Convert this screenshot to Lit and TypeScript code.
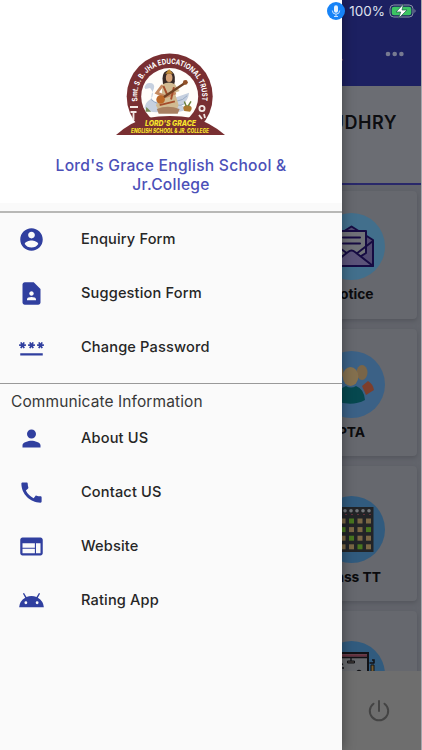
import { LitElement, css, html, svg } from 'lit'
import { customElement, property } from 'lit/decorators.js'

const icons: Record<string, any> = {
    account: svg`<path d="M12 2C6.480 2 2 6.480 2 12s4.480 10 10 10 10-4.480 10-10S17.520 2 12 2zm0 3c1.660 0 3 1.340 3 3s-1.340 3-3 3-3-1.340-3-3 1.340-3 3-3zm0 14.200c-2.500 0-4.710-1.280-6-3.220.030-1.990 4-3.080 6-3.080 1.990 0 5.970 1.090 6 3.080-1.290 1.940-3.500 3.220-6 3.220z"/>`,
    contactPage: svg`<path d="M14 2H6c-1.100 0-2 .9-2 2v16c0 1.100.9 2 2 2h12c1.100 0 2-.9 2-2V8l-6-6zm-2 8c1.100 0 2 .9 2 2s-.9 2-2 2-2-.9-2-2 .9-2 2-2zm4 8H8v-.570c0-.810.480-1.530 1.220-1.850A6.950 6.950 0 0 1 12 15c.990 0 1.930.210 2.780.580.740.320 1.220 1.040 1.220 1.850V18z"/>`,
    password: svg`<path d="M2 17h20v2H2v-2zm1.150-4.050L4 11.470l.850 1.480 1.300-.750-.850-1.480H7v-1.500H5.300l.850-1.470L4.850 7 4 8.470 3.150 7l-1.300.750.850 1.470H1v1.500h1.700l-.850 1.480 1.300.750zm6.700-.750 1.300.750.850-1.480.850 1.480 1.300-.750-.850-1.480H15v-1.500h-1.700l.850-1.470-1.300-.750L12 8.470 11.150 7l-1.300.750.850 1.470H9v1.500h1.700l-.850 1.480zM23 9.220h-1.700l.850-1.470-1.300-.750L20 8.470 19.150 7l-1.300.750.850 1.470H17v1.500h1.700l-.850 1.480 1.300.750.850-1.480.850 1.480 1.300-.750-.850-1.480H23v-1.500z"/>`,
    person: svg`<path d="M12 12c2.210 0 4-1.790 4-4s-1.790-4-4-4-4 1.790-4 4 1.790 4 4 4zm0 2c-2.670 0-8 1.340-8 4v2h16v-2c0-2.660-5.330-4-8-4z"/>`,
    phone: svg`<path d="M20.010 15.380c-1.230 0-2.420-.200-3.530-.560-.350-.120-.740-.030-1.010.240l-1.570 1.970c-2.830-1.350-5.480-3.900-6.890-6.830l1.950-1.660c.270-.280.350-.670.240-1.020-.370-1.110-.560-2.300-.560-3.530 0-.540-.450-.990-.990-.990H4.190C3.650 3 3 3.240 3 3.990 3 13.280 10.730 21 20.010 21c.710 0 .990-.630.990-1.180v-3.450c0-.540-.450-.990-.990-.990z"/>`,
    web: svg`<path d="M20 4H4c-1.100 0-2 .9-2 2v12c0 1.100.9 2 2 2h16c1.100 0 2-.9 2-2V6c0-1.100-.9-2-2-2zm-5 14H4v-4h11v4zm0-5H4V9h11v4zm5 5h-4V9h4v9z"/>`,
    android: svg`<path d="M17.600 9.480l1.840-3.180c.160-.310.040-.690-.260-.850-.290-.150-.650-.060-.830.220l-1.880 3.240a11.460 11.460 0 0 0-8.940 0L5.650 5.670c-.190-.290-.580-.380-.870-.200-.280.180-.370.540-.220.830L6.400 9.480A10.780 10.780 0 0 0 1 18h22a10.780 10.780 0 0 0-5.400-8.520zM7 15.250a1.250 1.250 0 1 1 0-2.500 1.250 1.250 0 0 1 0 2.500zm10 0a1.250 1.250 0 1 1 0-2.500 1.250 1.250 0 0 1 0 2.500z"/>`,
}

const ttRows = [
    ['#7a6744', '#7a6744', '#48761f', '#7a6744', '#7a6744'],
    ['#7a6744', '#48761f', '#7a6744', '#7a6744', '#48761f'],
    ['#48761f', '#7a6744', '#48761f', '#7a6744', '#7a6744'],
    ['#7a6744', '#7a6744', '#7a6744', '#48761f', '#7a6744'],
]

const tiles: Record<string, any> = {
    notice: svg`
        <circle cx="33.500" cy="33.500" r="33.500" fill="#426f8c"/>
        <g stroke="#160b42" stroke-width="2" stroke-linejoin="round">
            <path d="M12 27L33.500 13.500 55 27v26H12z" fill="#514a70"/>
            <path d="M19 18h29v22L33.500 49 19 40z" fill="#707278"/>
            <path d="M12 28l18 13M55 28L38 41" fill="none"/>
            <path d="M12 53l18-14q3.500-3 7 0l18 14z" fill="#5b5379"/>
            <path d="M25 24.500h17M25 30.500h17" stroke-linecap="round"/>
        </g>`,
    pta: svg`
        <circle cx="33.500" cy="33.500" r="33.500" fill="#3b6186"/>
        <path d="M44 35l6-5q5 3 6 9l-8 5z" fill="#7d3e2c"/>
        <path d="M23 35l-6-5q-5 3-6 9l8 5z" fill="#7d3e2c"/>
        <ellipse cx="44" cy="21.500" rx="5.500" ry="7.500" fill="#796548"/>
        <ellipse cx="20" cy="21.500" rx="5.500" ry="7.500" fill="#796548"/>
        <ellipse cx="32.500" cy="25.500" rx="7.800" ry="9.500" fill="#84704e"/>
        <path d="M18 50q1-12 10-15 5 3 10 0 8 3 9 14-13 7-29 1z" fill="#06484f"/>`,
    timetable: svg`
        <circle cx="33.500" cy="33.500" r="33.500" fill="#315b7e"/>
        <path d="M11 11h44.500v45H11z" fill="#222427"/>
        ${[15, 21, 27, 33, 39, 45, 51].map(x => svg`
            <circle cx=${x} cy="14.800" r="1.800" fill="#73767a"/>
            <path d="M${x} 18.500h2" stroke="#60303a"/>`)}
        ${ttRows.map((row, r) => row.map((fill, c) => svg`
            <rect x=${14 + c * 8.500} y=${22.500 + r * 8.600} width="5" height="5" fill=${fill}/>`))}`,
    board: svg`
        <circle cx="33.500" cy="33.500" r="33.500" fill="#315b7e"/>
        <path d="M9 12h41v26H9z" fill="#67696d" stroke="#111216" stroke-width="2"/>
        <path d="M10 14.500h39" stroke="#65303f" stroke-width="2.500"/>
        <path d="M9 16.500h41M33 17v3" stroke="#111216" stroke-width="1.300"/>
        <path d="M29.500 20h7v2h-7z" fill="#514642" stroke="#111216"/>
        <path d="M53 24h3v12h-3z" fill="#795d2d" stroke="#111216"/>
        <path d="M51.500 22h5M54 19h2v3M22 24l3-1M24 27h2M38 32q3-5 6 0M24 23l-2 4" fill="none" stroke="#111216" stroke-width="1.500"/>`,
}

@customElement('menu-row')
class MenuRow extends LitElement {
    @property() icon = ''
    @property() label = ''

    render() {
        return html`<svg viewBox="0 0 24 24">${icons[this.icon]}</svg><span>${this.label}</span>`
    }

    static styles = css`
    :host{
        display:flex;
        align-items:center;
        height:54px;
        padding-left:18px;
    }
    svg{
        width:27px;
        height:27px;
        fill:#303f9f;
        margin-right:36px;
    }
    span{
        margin-bottom:1px;
        font-size:14.6px;
        font-weight:450;
        letter-spacing:0.15px;
        color:#262626;
    }
    `
}

@customElement('home-tile')
class HomeTile extends LitElement {
    @property() icon = ''
    @property() label = ''

    render() {
        return html`<svg viewBox="0 0 67 67">${tiles[this.icon]}</svg><span>${this.label}</span>`
    }

    static styles = css`
    :host{
        display:flex;
        flex-direction:column;
        align-items:center;
        box-sizing:border-box;
        width:131px;
        padding-top:22px;
        background:#66686e;
        border-radius:4px;
        box-shadow:0 2px 4px #54565c;
    }
    svg{
        width:67px;
        height:67px;
        flex:none;
    }
    span{
        margin-top:5px;
        font-size:13.8px;
        line-height:18px;
        font-weight:700;
        color:#0b0b0d;
    }
    `
}

@customElement('app-root')
class AppRoot extends LitElement {

    renderHome() {
        return html`
        <div class="home">
            <div class="appbar">
                <span class="title">.</span>
                <svg width="20" height="6" viewBox="0 0 20 6"><circle cx="3" cy="3" r="2.300"/><circle cx="9.700" cy="3" r="2.300"/><circle cx="16.400" cy="3" r="2.300"/></svg>
            </div>
            <div class="student">CHOUDHRY</div>
            <div class="tiles">
                <home-tile class="first" icon="notice" label="Notice"></home-tile>
                <home-tile class="second" icon="pta" label="PTA"></home-tile>
                <home-tile class="third" icon="timetable" label="Class TT"></home-tile>
                <home-tile class="fourth" icon="board" label=""></home-tile>
            </div>
            <div class="bottom">
                <svg width="24" height="24" viewBox="0 0 24 24"><path d="M12 2v10M6.500 4.700a9.200 9.200 0 1 0 11 0"/></svg>
            </div>
        </div>`
    }

    renderLogo() {
        return html`
        <svg class="logo" width="110" height="84" viewBox="0 0 110 84">
            <defs>
                <path id="arc" d="M21.700 49.100A32.500 32.500 0 1 1 85.700 49.100"/>
                <clipPath id="base"><path d="M0 0h110v82H0z"/></clipPath>
            </defs>
            <circle cx="53.700" cy="43.500" r="43" fill="#792f32" clip-path="url(#base)"/>
            <circle cx="53.700" cy="43.500" r="28.500" fill="#fffdf9"/>
            <text class="ring"><textPath href="#arc" startOffset="1" textLength="111" lengthAdjust="spacingAndGlyphs">Smt. S. B. JHA EDUCATIONAL TRUST</textPath></text>
            <path d="M14 54h8M17.500 59v8M14.500 59h6" stroke="#f3e8e4" stroke-width="1.800"/>
            <circle cx="86" cy="55.500" r="2.600" fill="#792f32" stroke="#f3e8e4" stroke-width="1.800"/>
            <path d="M83 62l3 4M88 61l1 4" stroke="#f3e8e4" stroke-width="1.800"/>
            <g transform="translate(-1 -1) scale(.95)">
                <!-- swan -->
                <path d="M31 37q2-6 8-4 4 2 1 8-4 7 1 11l8 1 17-6 12-4q-1 9-8 13l7 4q-14 6-28 3-12 2-18-4 1-6 6-9 6-5 0-12l-5 1z" fill="#c6d0df"/>
                <path d="M38 50q7 6 13 5M64 52q8-1 12-6M64 56q6 1 10-2" fill="none" stroke="#96a9c2"/>
                <!-- goddess -->
                <path d="M50 28q0-8 7-9 7 2 6 12l-2 9-10-1z" fill="#372925"/>
                <ellipse cx="57" cy="27" rx="3.500" ry="4.500" fill="#d6a377"/>
                <path d="M53 23l4-5 4 5z" fill="#bd8733"/>
                <path d="M50 34q7-4 13 0l5 7-5 2 4 13-3 7H47l-4-7 6-9z" fill="#d1bb92"/>
                <path d="M50 35l-6 8 9 4 11-4" fill="none" stroke="#c58a60" stroke-width="3"/>
                <path d="M51 36l4 9M62 37l-3 13M47 56l16-4" stroke="#a54d2b" stroke-width="2"/>
                <path d="M46 51L76 31" stroke="#704022" stroke-width="2.500"/>
                <circle cx="48" cy="50" r="4.500" fill="#bd6827"/>
                <circle cx="74" cy="32" r="2.500" fill="#925025"/>
                <path d="M44 60q11-5 24 0l-2 5H46z" fill="#a98061"/>
                <path d="M73 62q-3-5 2-6h3q5 2 1 7z" fill="#ae792f"/>
                <path d="M75 57l-2-5M77 57l3-5" stroke="#6d833e" stroke-width="1.500"/>
                <path d="M33 58l5 5h-6z" fill="#778d58"/>
            </g>
            <path d="M0 82Q16 68 31 65q23-4 46 0 17 4 32 17z" fill="#792f32"/>
            <text class="name" x="29" y="72.500" textLength="51" lengthAdjust="spacingAndGlyphs">LORD'S GRACE</text>
            <text class="sub" x="15" y="79.500" textLength="78" lengthAdjust="spacingAndGlyphs">ENGLISH SCHOOL &amp; JR. COLLEGE</text>
        </svg>`
    }

    render() {
        return html`
        ${this.renderHome()}
        <div class="drawer">
            <div class="header">
                ${this.renderLogo()}
                <div class="school">Lord's Grace English School &amp;<br>Jr.College</div>
            </div>
            <div class="group forms">
                <menu-row icon="account" label="Enquiry Form"></menu-row>
                <menu-row icon="contactPage" label="Suggestion Form"></menu-row>
                <menu-row icon="password" label="Change Password"></menu-row>
            </div>
            <div class="group">
                <div class="caption">Communicate Information</div>
                <menu-row icon="person" label="About US"></menu-row>
                <menu-row icon="phone" label="Contact US"></menu-row>
                <menu-row icon="web" label="Website"></menu-row>
                <menu-row icon="android" label="Rating App"></menu-row>
            </div>
        </div>
        <div class="status">
            <svg width="18" height="18" viewBox="0 0 18 18">
                <circle cx="9" cy="9" r="9" fill="#1683f7"/>
                <rect x="7" y="3.300" width="4" height="7.500" rx="2" fill="#e5f2ff"/>
                <path d="M5.300 8.500a3.700 3.700 0 0 0 7.400 0M9 12.200v2.300M7 14.500h4" fill="none" stroke="#c5e1ff"/>
            </svg>
            <span>100%</span>
            <svg width="28" height="16" viewBox="0 0 28 16">
                <rect x="1" y="2" width="23" height="12" rx="3.800" fill="none" stroke="#8c95a8"/>
                <rect x="2.700" y="3.700" width="19.600" height="8.600" rx="2.300" fill="#3cc463"/>
                <path d="M25.500 6q2 2 0 4z" fill="#8c95a8"/>
                <path d="M14.500 1L7 9h4.700L9.700 15.300 18 7h-5z" fill="#fff" stroke="#1c5b47" stroke-width=".7"/>
            </svg>
        </div>
        `
    }

    static styles = css`
    :host{
        display:block;
        position:relative;
        width:422px;
        height:750px;
        overflow:hidden;
        font-family:Inter, "Liberation Sans", sans-serif;
    }
    .home{
        display:flex;
        flex-direction:column;
        box-sizing:border-box;
        height:750px;
        background:#62646b;
        border-right:1px solid #a5a6ac;
    }
    .appbar{
        display:flex;
        align-items:center;
        justify-content:flex-end;
        box-sizing:border-box;
        height:86px;
        padding:22px 16px 0 0;
        background:#1c2061;
        fill:#777a91;
    }
    .title{
        margin-right:41px;
        color:#777a91;
        font-size:18px;
    }
    .student{
        box-sizing:border-box;
        height:99px;
        padding:26px 24px 0 0;
        background:#6b6d73;
        border-bottom:2px solid #29286a;
        color:#0d0e11;
        font-size:18px;
        line-height:22px;
        font-weight:600;
        letter-spacing:0.5px;
        text-align:right;
    }
    .tiles{
        flex:1;
        min-height:0;
        overflow:hidden;
        display:flex;
        flex-direction:column;
        align-items:flex-end;
        gap:10px;
        padding:6px 4px 0 0;
    }
    home-tile{
        flex:none;
        height:135px;
    }
    .first{
        height:128px;
    }
    .second{
        height:127px;
    }
    .third{
        padding-top:30px;
    }
    .fourth{
        padding-top:30px;
    }
    .bottom{
        display:flex;
        align-items:center;
        justify-content:flex-end;
        box-sizing:border-box;
        height:79px;
        padding-right:30px;
        background:#6e6e6e;
        fill:none;
        stroke:#444;
        stroke-width:2;
        stroke-linecap:round;
    }
    .drawer{
        position:absolute;
        top:0;
        left:0;
        width:342px;
        height:750px;
        background:#fafafa;
        box-shadow:0 0 12px rgba(0,0,0,0.4);
    }
    .header{
        display:flex;
        flex-direction:column;
        align-items:center;
        box-sizing:border-box;
        height:203px;
        margin-bottom:8px;
        padding-top:53px;
        background:#fff;
    }
    .ring{
        font:700 7.5px Inter, sans-serif;
        fill:#fff;
    }
    .name{
        font:italic 800 8px Inter, sans-serif;
        fill:#f8e42c;
    }
    .sub{
        font:italic 800 6px Inter, sans-serif;
        fill:#f8e42c;
    }
    .school{
        margin-top:19px;
        color:#4c50b8;
        font-size:15.6px;
        line-height:19px;
        font-weight:450;
        letter-spacing:0.25px;
        text-align:center;
    }
    .group{
        border-top:1px solid #999;
    }
    .forms{
        box-sizing:border-box;
        height:172px;
        border-top:2px solid #b8b8b6;
    }
    .forms menu-row:first-child{
        margin-top:-1px;
    }
    .caption{
        height:27px;
        padding-left:11px;
        line-height:36px;
        font-size:15.5px;
        letter-spacing:0.1px;
        color:#383838;
    }
    .status{
        position:absolute;
        top:2px;
        right:5px;
        display:flex;
        align-items:center;
        height:18px;
        color:#dfe0ee;
        font-size:13.5px;
    }
    .status span{
        margin:0 4px 0 4px;
    }
    `
}
